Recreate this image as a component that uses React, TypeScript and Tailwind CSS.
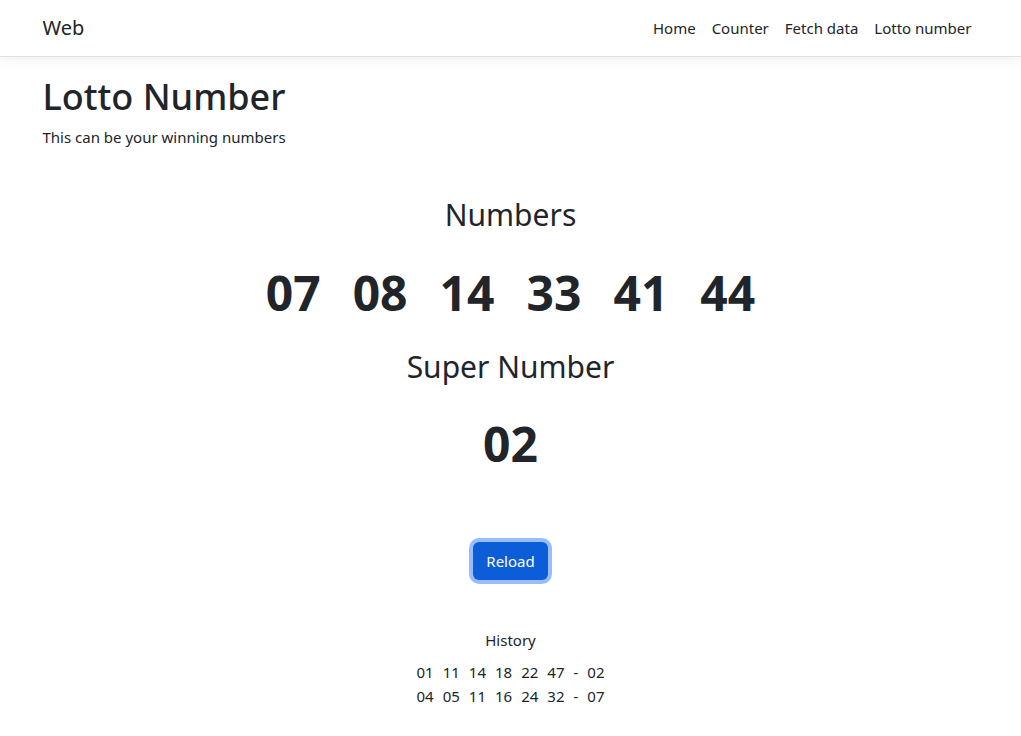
import React from 'react';

const numbers = ['07', '08', '14', '33', '41', '44'];
const history = [
  { nums: ['01', '11', '14', '18', '22', '47'], superNum: '02' },
  { nums: ['04', '05', '11', '16', '24', '32'], superNum: '07' },
];

export default function App() {
  return (
    <div className="min-h-screen bg-white text-[#212529] font-['Noto_Sans',sans-serif]">
      {/* Navbar */}
      <header className="h-[57px] border-b border-[#dee2e6] bg-white shadow-[0_4px_12px_rgba(0,0,0,0.05)]">
        <div className="mx-auto flex h-full w-[960px] items-center justify-between px-3">
          <a className="text-[20px] leading-[30px] text-[#212529]">Web</a>
          <nav className="mr-[7px] flex items-center gap-4 text-[15px] text-[#212529]">
            <a>Home</a>
            <a>Counter</a>
            <a>Fetch data</a>
            <a>Lotto number</a>
          </nav>
        </div>
      </header>

      <main className="mx-auto w-[960px] px-3 pt-4">
        <h1 className="text-[36px] font-medium leading-[48px]">Lotto Number</h1>
        <p className="mt-1 text-[15px] leading-6">This can be your winning numbers</p>

        <div className="mt-[46px] flex flex-col items-center">
          <h2 className="text-[30px] leading-[40px]">Numbers</h2>
          <div className="mt-[29px] flex gap-8 text-[48px] font-bold leading-[58px]">
            {numbers.map((n) => (
              <span key={n}>{n}</span>
            ))}
          </div>
          <h2 className="mt-[25px] text-[30px] leading-[40px]">Super Number</h2>
          <div className="mt-[28px] text-[48px] font-bold leading-[58px]">02</div>

          <button className="mt-[69px] h-[38px] rounded-md bg-[#0b5ed7] px-[13px] text-[15px] leading-6 text-white ring-4 ring-[#98bdf9]">
            Reload
          </button>

          <div className="mt-[48px] text-[15px] leading-6">History</div>
          <div className="mt-2 flex flex-col items-center text-[15px] leading-6">
            {history.map((h, i) => (
              <div key={i} className="flex gap-[9px]">
                {h.nums.map((n, j) => (
                  <span key={j}>{n}</span>
                ))}
                <span>-</span>
                <span>{h.superNum}</span>
              </div>
            ))}
          </div>
        </div>
      </main>
    </div>
  );
}
